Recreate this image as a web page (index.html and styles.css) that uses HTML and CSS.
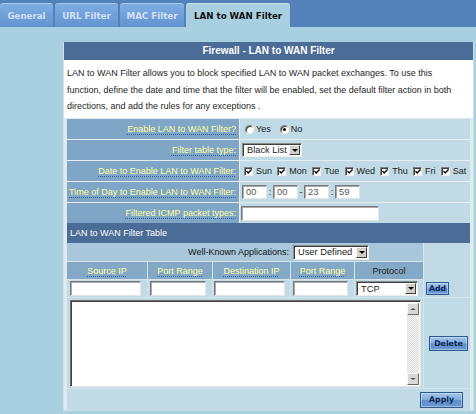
FILE: index.html
```html
<!DOCTYPE html>
<html>
<head>
<meta charset="utf-8">
<title>LAN to WAN Filter</title>
<link rel="stylesheet" href="styles.css">
</head>
<body>
<div class="topbar">
  <div class="tab t1">General</div>
  <div class="tab t2">URL Filter</div>
  <div class="tab t3">MAC Filter</div>
  <div class="tab active t4">LAN to WAN Filter</div>
</div>
<div class="panel">
  <div class="title">Firewall - LAN to WAN Filter</div>
  <div class="desc">LAN to WAN Filter allows you to block specified LAN to WAN packet exchanges. To use this<br>function, define the date and time that the filter will be enabled, set the default filter action in both<br>directions, and add the rules for any exceptions .</div>
  <div class="form">
    <div class="lbl"><span>Enable LAN to WAN Filter?</span></div>
    <div class="val radios">
      <span class="radio"></span><span class="rt">Yes</span>
      <span class="radio on"></span><span class="rt">No</span>
    </div>
    <div class="lbl"><span>Filter table type:</span></div>
    <div class="val pl2">
      <span class="sel s-black"><span class="st">Black List</span><span class="arr"><i></i></span></span>
    </div>
    <div class="lbl"><span>Date to Enable LAN to WAN Filter:</span></div>
    <div class="val days">
      <span class="day"><span class="cb"><svg width="7" height="7" viewBox="0 0 7 7"><polyline points="0.5,3 2.5,5.2 6.5,1" fill="none" stroke="#000" stroke-width="1.6"/></svg></span>Sun</span>
      <span class="day"><span class="cb"><svg width="7" height="7" viewBox="0 0 7 7"><polyline points="0.5,3 2.5,5.2 6.5,1" fill="none" stroke="#000" stroke-width="1.6"/></svg></span>Mon</span>
      <span class="day"><span class="cb"><svg width="7" height="7" viewBox="0 0 7 7"><polyline points="0.5,3 2.5,5.2 6.5,1" fill="none" stroke="#000" stroke-width="1.6"/></svg></span>Tue</span>
      <span class="day"><span class="cb"><svg width="7" height="7" viewBox="0 0 7 7"><polyline points="0.5,3 2.5,5.2 6.5,1" fill="none" stroke="#000" stroke-width="1.6"/></svg></span>Wed</span>
      <span class="day"><span class="cb"><svg width="7" height="7" viewBox="0 0 7 7"><polyline points="0.5,3 2.5,5.2 6.5,1" fill="none" stroke="#000" stroke-width="1.6"/></svg></span>Thu</span>
      <span class="day"><span class="cb"><svg width="7" height="7" viewBox="0 0 7 7"><polyline points="0.5,3 2.5,5.2 6.5,1" fill="none" stroke="#000" stroke-width="1.6"/></svg></span>Fri</span>
      <span class="day"><span class="cb"><svg width="7" height="7" viewBox="0 0 7 7"><polyline points="0.5,3 2.5,5.2 6.5,1" fill="none" stroke="#000" stroke-width="1.6"/></svg></span>Sat</span>
    </div>
    <div class="lbl"><span>Time of Day to Enable LAN to WAN Filter:</span></div>
    <div class="val pl2">
      <input class="tb time" value="00"><span class="sep">:</span><input class="tb time" value="00"><span class="sep">-</span><input class="tb time" value="23"><span class="sep">:</span><input class="tb time" value="59">
    </div>
    <div class="lbl"><span>Filtered ICMP packet types:</span></div>
    <div class="val pl1">
      <input class="tb icmp" value="">
    </div>
  </div>
  <div class="sechead">LAN to WAN Filter Table</div>
  <div class="tbl">
    <div class="wk">Well-Known Applications:<span class="sel s-user"><span class="st">User Defined</span><span class="arr"><i></i></span></span></div>
    <div class="addcell"><span class="btn b-add">Add</span></div>
    <div class="ch"><span>Source IP</span></div>
    <div class="ch"><span>Port Range</span></div>
    <div class="ch"><span>Destination IP</span></div>
    <div class="ch"><span>Port Range</span></div>
    <div class="ch proto">Protocol</div>
    <div class="ic"><input class="tb w-src" value=""></div>
    <div class="ic"><input class="tb w-p1" value=""></div>
    <div class="ic"><input class="tb w-dst" value=""></div>
    <div class="ic"><input class="tb w-p2" value=""></div>
    <div class="ic"><span class="sel s-tcp"><span class="st">TCP</span><span class="arr"><i></i></span></span></div>
    <div class="list">
      <div class="ta">
        <div class="sb">
          <span class="sbtn"><i class="up"></i></span>
          <span class="track"></span>
          <span class="sbtn"><i></i></span>
        </div>
      </div>
    </div>
    <div class="delcell"><span class="btn b-del">Delete</span></div>
    <div class="applyrow"><span class="btn b-apply">Apply</span></div>
  </div>
</div>
</body>
</html>
```

FILE: styles.css
```css
* { box-sizing: border-box; }
body {
  margin: 0;
  width: 476px;
  height: 414px;
  overflow: hidden;
  background: #a9d0e0;
  font-family: "Liberation Sans", Arial, sans-serif;
  font-size: 9px;
  color: #1a1a1a;
}
.topbar {
  height: 27px;
  background: #5381ba;
  display: flex;
  align-items: flex-end;
  gap: 2px;
}
.tab {
  height: 24px;
  display: flex;
  align-items: center;
  justify-content: center;
  font-family: "DejaVu Sans", Verdana, sans-serif;
  font-weight: bold;
  font-size: 8.7px;
  color: #d2e1f2;
  background: linear-gradient(#7dade2, #6293cf);
  border-top: 1px solid #a2c6ec;
  border-radius: 3px 3px 0 0;
}
.t1 { width: 53px; }
.t2 { width: 63px; }
.t3 { width: 64px; }
.t4 { width: 104px; }
.tab.active {
  background: #a9d0e0;
  color: #111;
  border-top-color: #c9e2ec;
}
.panel {
  margin: 15px 0 0 63px;
  width: 411px;
  border: 1px solid #cddfe7;
  border-top: 0;
  background: #dfe9ee;
}
.title {
  height: 18px;
  line-height: 18px;
  background: #4b6c96;
  color: #fff;
  font-weight: bold;
  font-size: 10px;
  text-align: center;
}
.desc {
  height: 58px;
  background: #fff;
  padding: 5px 3px 0 3px;
  line-height: 16.5px;
  color: #1e1e1e;
}
.form {
  margin: 1px 3px 0;
  display: grid;
  grid-template-columns: 172px 1fr;
  grid-auto-rows: 20px;
  gap: 1px;
  background: #e4eef2;
}
.lbl {
  background: #7fa6c6;
  display: flex;
  align-items: center;
  justify-content: flex-end;
  padding-right: 3px;
}
.lbl span, .ch span {
  color: #ffffa0;
  text-decoration: underline dotted #2f62a8;
  text-underline-offset: 2px;
}
.val {
  background: #c1dbe6;
  display: flex;
  align-items: center;
}
.pl1 { padding-left: 1px; }
.pl2 { padding-left: 2px; }
.radios { padding-left: 5px; }
.radio {
  width: 9px;
  height: 9px;
  border-radius: 50%;
  background: #fff;
  border: 1px solid;
  border-color: #808080 #f4f4f4 #f4f4f4 #808080;
  box-shadow: inset 1px 1px 0 #404040;
  display: flex;
  align-items: center;
  justify-content: center;
}
.radio.on::after {
  content: "";
  width: 3px;
  height: 3px;
  border-radius: 50%;
  background: #000;
}
.rt { margin-left: 2px; margin-right: 9px; }
.sel {
  display: inline-flex;
  align-items: stretch;
  background: #fff;
  border: 1px solid;
  border-color: #8a8a8a #eeeeee #eeeeee #8a8a8a;
  box-shadow: inset 1px 1px 0 #404040;
  font-size: 9.3px;
  color: #222;
}
.sel .st {
  flex: 1;
  display: flex;
  align-items: center;
  padding-left: 4px;
  white-space: nowrap;
}
.arr {
  width: 11px;
  margin: 1px 1px 1px 0;
  background: #d4d0c8;
  border: 1px solid;
  border-color: #f8f8f8 #404040 #404040 #f8f8f8;
  display: flex;
  align-items: center;
  justify-content: center;
}
.arr i {
  width: 0;
  height: 0;
  border-left: 3px solid transparent;
  border-right: 3px solid transparent;
  border-top: 3px solid #000;
}
.s-black { width: 60px; height: 14px; }
.s-user { width: 76px; height: 15px; margin-left: 4px; }
.s-tcp { width: 62px; height: 15px; }
.days { padding-left: 4px; gap: 5.3px; }
.day { display: inline-flex; align-items: center; }
.cb {
  width: 9px;
  height: 9px;
  margin-right: 3px;
  background: #fff;
  border: 1px solid;
  border-color: #808080 #f0f0f0 #f0f0f0 #808080;
  box-shadow: inset 1px 1px 0 #404040;
  display: flex;
  align-items: center;
  justify-content: center;
  padding: 1px 0 0 1px;
}
.cb svg { display: block; }
.tb {
  height: 15px;
  margin: 0;
  padding: 0 3px;
  border: 1px solid;
  border-color: #7a7a7a #e4e4e4 #e4e4e4 #7a7a7a;
  box-shadow: inset 1px 1px 0 #a8a8a8;
  background: #fff;
  font-family: "Liberation Sans", Arial, sans-serif;
  font-size: 9.3px;
  color: #555;
  outline: none;
}
.time { width: 25px; height: 14px; }
.sep { width: 6px; text-align: center; color: #222; }
.icmp { width: 138px; }
.sechead {
  margin: 0 3px;
  height: 20px;
  line-height: 20px;
  background: #4b6c96;
  color: #fff;
  padding-left: 3px;
}
.tbl {
  margin: 0 3px;
  display: grid;
  grid-template-columns: 80px 64px 77px 63px 68px 1fr;
  grid-template-rows: 18px 17px 17px 90px 21px;
  gap: 1px;
  background: #d6e4eb;
}
.wk {
  grid-column: 1 / 6;
  background: #a8c7da;
  display: flex;
  align-items: center;
  justify-content: flex-end;
  padding-right: 54px;
  color: #111;
}
.addcell {
  grid-column: 6;
  grid-row: 1 / 4;
  background: #c1dbe6;
  display: flex;
  align-items: flex-end;
  padding: 0 0 2px 2px;
}
.ch {
  background: #84a9c7;
  display: flex;
  align-items: center;
  justify-content: center;
}
.ch.proto { color: #1c1c1c; }
.ic {
  background: #c1dbe6;
  display: flex;
  align-items: center;
  justify-content: center;
  padding-right: 4px;
}
.w-src { width: 71px; }
.w-p1 { width: 56px; }
.w-dst { width: 71px; }
.w-p2 { width: 55px; }
.list {
  grid-column: 1 / 6;
  background: #c1dbe6;
  padding: 2px 2px 1px 3px;
}
.ta {
  height: 100%;
  background: #fff;
  border: 1px solid;
  border-color: #6f6f6f #e6e6e6 #e6e6e6 #6f6f6f;
  box-shadow: inset 1px 1px 0 #404040;
  display: flex;
  justify-content: flex-end;
  padding: 2px 1px 1px 2px;
}
.sb {
  width: 12px;
  display: flex;
  flex-direction: column;
}
.track {
  flex: 1;
  background-color: #f2f2f2;
  background-image: repeating-conic-gradient(#dcdcdc 0 25%, #f7f7f7 0 50%);
  background-size: 2px 2px;
}
.sbtn {
  height: 12px;
  background: #d8d8d8;
  border: 1px solid;
  border-color: #f6f6f6 #6a6a6a #6a6a6a #f6f6f6;
  display: flex;
  align-items: center;
  justify-content: center;
}
.sbtn i {
  width: 0;
  height: 0;
  border-left: 3px solid transparent;
  border-right: 3px solid transparent;
  border-top: 2px solid #555;
}
.sbtn i.up {
  border-top: 0;
  border-bottom: 2px solid #555;
}
.delcell {
  grid-column: 6;
  background: #c1dbe6;
  display: flex;
  align-items: center;
  padding-left: 5px;
}
.applyrow {
  grid-column: 1 / 7;
  background: #c1dbe6;
  display: flex;
  align-items: center;
  justify-content: flex-end;
  padding-right: 7px;
}
.btn {
  display: flex;
  align-items: center;
  justify-content: center;
  font-family: "DejaVu Sans", Verdana, sans-serif;
  font-weight: bold;
  font-size: 7.8px;
  color: #0f2b58;
  background: linear-gradient(#a5c5ea 0%, #86aede 45%, #5f8dc8 55%, #6c99d2 100%);
  border: 1px solid #2d5a90;
  box-shadow: inset 0 0 0 1px rgba(255, 255, 255, 0.35);
}
.b-add { width: 23px; height: 13px; }
.b-del { width: 39px; height: 15px; }
.b-apply { width: 43px; height: 16px; }
```
